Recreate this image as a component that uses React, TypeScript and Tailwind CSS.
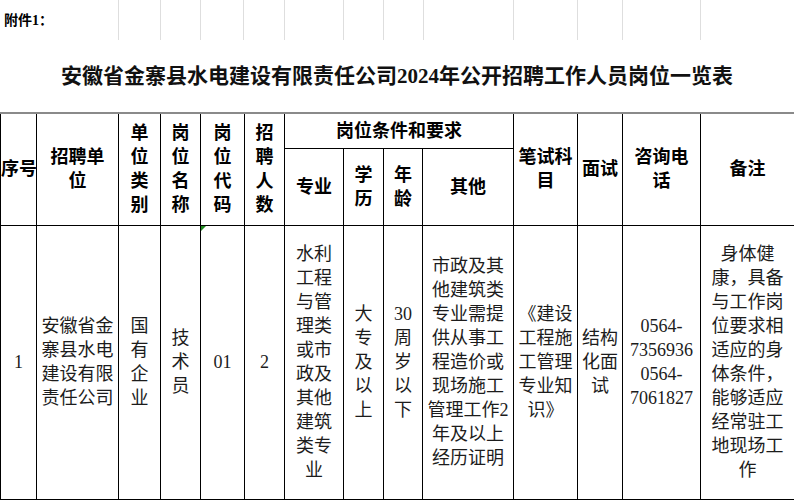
const font = { fontFamily: '"Liberation Serif", "Noto Sans CJK SC", serif' };

const colWidths = [36, 82, 42, 40, 44, 40, 59, 40, 39, 91, 64, 45, 78, 94];
const gridCols = [118, 42, 40, 43, 41, 59, 40, 40, 90, 64, 45, 78, 94];

const Lines = ({ lines }: { lines: string[] }) => (
  <>
    {lines.map((l, i) => (
      <div key={i} className="whitespace-nowrap">
        {l}
      </div>
    ))}
  </>
);

const th = "border border-black p-0 text-center align-middle font-bold text-[18px] leading-[24px] text-black";
const td = "border border-black p-0 text-center align-middle text-[18px] leading-[24px] text-[#1c1c1c]";

export default function App() {
  return (
    <div className="w-[794px] h-[500px] overflow-hidden bg-white" style={font}>
      {/* sheet gridlines above the table */}
      <div className="flex h-[40px]">
        {gridCols.map((w, i) => (
          <div
            key={i}
            className={i === 0 ? "flex items-center pl-[4px]" : "border-l border-[#dedede]"}
            style={{ width: w }}
          >
            {i === 0 && <span className="text-[14px] font-bold text-black">附件1：</span>}
          </div>
        ))}
      </div>

      <div className="flex h-[72px] items-center justify-center pt-[2px]">
        <h1 className="text-[21px] font-bold text-[#111] tracking-[0px]">
          安徽省金寨县水电建设有限责任公司2024年公开招聘工作人员岗位一览表
        </h1>
      </div>

      <table className="table-fixed border-collapse w-[794px] border-t-2 border-t-[#8a8a8a]">
        <colgroup>
          {colWidths.map((w, i) => (
            <col key={i} style={{ width: w }} />
          ))}
        </colgroup>
        <thead>
          <tr className="h-[35px]">
            <th rowSpan={2} className={th}>
              <Lines lines={["序号"]} />
            </th>
            <th rowSpan={2} className={th}>
              <Lines lines={["招聘单", "位"]} />
            </th>
            <th rowSpan={2} className={th}>
              <Lines lines={["单", "位", "类", "别"]} />
            </th>
            <th rowSpan={2} className={th}>
              <Lines lines={["岗", "位", "名", "称"]} />
            </th>
            <th rowSpan={2} className={th}>
              <Lines lines={["岗", "位", "代", "码"]} />
            </th>
            <th rowSpan={2} className={th}>
              <Lines lines={["招", "聘", "人", "数"]} />
            </th>
            <th colSpan={4} className={th}>
              岗位条件和要求
            </th>
            <th rowSpan={2} className={th}>
              <Lines lines={["笔试科", "目"]} />
            </th>
            <th rowSpan={2} className={th}>
              <Lines lines={["面试"]} />
            </th>
            <th rowSpan={2} className={th}>
              <Lines lines={["咨询电", "话"]} />
            </th>
            <th rowSpan={2} className={th}>
              <Lines lines={["备注"]} />
            </th>
          </tr>
          <tr className="h-[77px]">
            <th className={th}>专业</th>
            <th className={th}>
              <Lines lines={["学", "历"]} />
            </th>
            <th className={th}>
              <Lines lines={["年", "龄"]} />
            </th>
            <th className={th}>其他</th>
          </tr>
        </thead>
        <tbody>
          <tr className="h-[274px]">
            <td className={td}>1</td>
            <td className={td}>
              <Lines lines={["安徽省金", "寨县水电", "建设有限", "责任公司"]} />
            </td>
            <td className={td}>
              <Lines lines={["国", "有", "企", "业"]} />
            </td>
            <td className={td}>
              <Lines lines={["技", "术", "员"]} />
            </td>
            <td className={`${td} relative`}>
              <span className="absolute left-0 top-0 h-0 w-0 border-t-[5px] border-r-[5px] border-t-[#1f8a1f] border-r-transparent" />
              01
            </td>
            <td className={td}>2</td>
            <td className={td}>
              <Lines lines={["水利", "工程", "与管", "理类", "或市", "政及", "其他", "建筑", "类专", "业"]} />
            </td>
            <td className={td}>
              <Lines lines={["大", "专", "及", "以", "上"]} />
            </td>
            <td className={td}>
              <Lines lines={["30", "周", "岁", "以", "下"]} />
            </td>
            <td className={td}>
              <Lines
                lines={["市政及其", "他建筑类", "专业需提", "供从事工", "程造价或", "现场施工", "管理工作2", "年及以上", "经历证明"]}
              />
            </td>
            <td className={td}>
              <Lines lines={["《建设", "工程施", "工管理", "专业知", "识》"]} />
            </td>
            <td className={td}>
              <Lines lines={["结构", "化面", "试"]} />
            </td>
            <td className={td}>
              <Lines lines={["0564-", "7356936", "0564-", "7061827"]} />
            </td>
            <td className={td}>
              <Lines
                lines={["身体健", "康，具备", "与工作岗", "位要求相", "适应的身", "体条件，", "能够适应", "经常驻工", "地现场工", "作"]}
              />
            </td>
          </tr>
        </tbody>
      </table>
    </div>
  );
}
